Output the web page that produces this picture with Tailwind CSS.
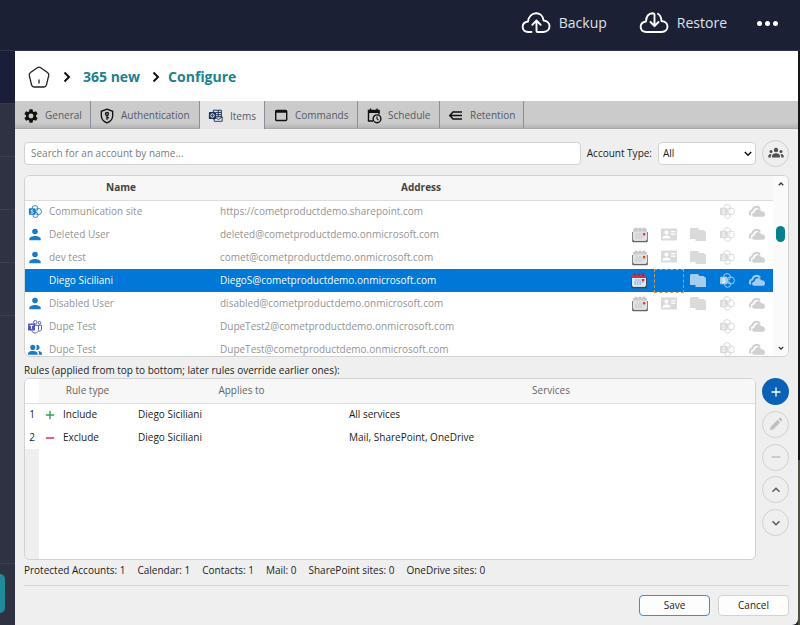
<!DOCTYPE html>
<html lang="en">
  <head>
    <meta charset="UTF-8" />
    <meta name="viewport" content="width=device-width, initial-scale=1.0" />
    <title>Configure - 365 new</title>
    <script src="https://cdn.jsdelivr.net/npm/@tailwindcss/browser@4"></script>
  </head>
  <body class="flex min-h-screen flex-col overflow-x-hidden bg-[#1b2035] font-['Open_Sans','Noto_Sans',sans-serif] text-[10px] text-[#1c1c1c]">
    <!-- icons -->
    <svg class="hidden">
      <symbol id="cal" viewBox="0 0 16 16">
        <path d="M1 5v9.500h14V5" fill="#fff" stroke="#666" stroke-width="1.600" stroke-linejoin="round" />
        <rect x="1" y="1.500" width="14" height="11.800" rx="1.500" fill="#e2e2e2" />
        <path d="M1 4.700V3Q1 1.500 2.500 1.500h11Q15 1.500 15 3v1.700z" fill="#cfcfcf" />
        <path d="M4 .5v2.500M8 .5v2.500M12 .5v2.500" stroke="#b5b5b5" />
        <path d="M4.500 7h6M3.500 9h9M3.500 11h7" stroke="#bcbcbc" stroke-dasharray="1.500 1" />
        <rect x="11" y="6" width="2.300" height="2.300" fill="#d8443c" />
      </symbol>
      <symbol id="calOn" viewBox="0 0 16 16">
        <path d="M1 5v9.500h14V5" fill="#fff" stroke="#444" stroke-width="1.600" stroke-linejoin="round" />
        <rect x="1" y="4" width="14" height="9.300" rx="1" fill="#d6ebfb" />
        <path d="M1 4.900V3Q1 1.500 2.500 1.500h11Q15 1.500 15 3v1.900z" fill="#d02f45" />
        <path d="M4 .5v2.500M8 .5v2.500M12 .5v2.500" stroke="#8b2030" />
        <path d="M4.500 7h6M3.500 9h9M3.500 11h7" stroke="#5f92cc" stroke-dasharray="1.500 1" />
        <rect x="11" y="6" width="2.300" height="2.300" fill="#d02f45" />
      </symbol>
      <symbol id="contact" viewBox="0 0 16 16">
        <path fill="currentColor" fill-rule="evenodd" d="M1 1.500h14a1 1 0 0 1 1 1v10a1 1 0 0 1-1 1H1a1 1 0 0 1-1-1v-10a1 1 0 0 1 1-1zM5.500 3.500a2.100 2.100 0 1 0 0 4.200 2.100 2.100 0 0 0 0-4.200zM1.500 11.500h8c0-2-1.800-3-4-3s-4 1-4 3zM10 4v1.200h4.500V4zM10 6.500v1.200h4.500V6.500z" />
      </symbol>
      <symbol id="files" viewBox="0 0 16 16">
        <path fill="currentColor" d="M0 2 1 1h7l1.500 2h4l2.500 2V14H5.500V12H0z" />
      </symbol>
      <symbol id="sp" viewBox="0 0 16 16">
        <g fill="none" stroke="currentColor" stroke-width="1">
          <circle cx="8" cy="4" r="3.400" />
          <circle cx="11.800" cy="7.500" r="3.600" />
          <circle cx="8.500" cy="11.300" r="3" />
        </g>
        <rect x="1" y="3.800" width="7.400" height="7.400" rx="1" fill="currentColor" />
        <path d="M6 6.100C5 5.300 3.400 5.600 3.400 6.600c0 1.100 2.600.8 2.600 1.900 0 1.100-1.800 1.200-2.800.6" fill="none" stroke="#fff" stroke-width="1" />
      </symbol>
      <symbol id="cloud" viewBox="0 0 16 16">
        <path fill="none" stroke="currentColor" stroke-width="2" d="M1.800 11.200C0 9.500 1 6.800 3.300 6.600 4 2.500 9 1.500 11 4.800" />
        <path fill="currentColor" d="M5 12.800c-2.800-.6-2.300-4.300.6-4.300.4-4 5.200-4.700 6.600-1.300 2.500-.4 3.800 1.200 3.800 3 0 1.500-.8 2.600-2 2.600z" />
      </symbol>
      <symbol id="user" viewBox="0 0 16 16">
        <circle cx="8" cy="4" r="3.200" fill="currentColor" />
        <path fill="currentColor" d="M1.500 14v-1.500C1.500 10 5 9 8 9s6.500 1 6.500 3.500V14z" />
      </symbol>
      <symbol id="group" viewBox="0 0 16 16">
        <circle cx="5.500" cy="5" r="2.900" fill="currentColor" />
        <path fill="currentColor" d="M0 13.500v-1.500C0 9.800 3 9 5.500 9s5.500.8 5.500 3v1.500zM9.300 2.300a2.900 2.900 0 1 1 0 5.400c.9-1.500.9-3.900 0-5.400zM11.500 9.200c2.500.2 4.500 1.100 4.500 2.800v1.500h-3.500V12c0-1.200-.4-2.100-1-2.800z" />
      </symbol>
      <symbol id="teams" viewBox="0 0 16 16">
        <g fill="none" stroke="currentColor" stroke-width="1.100">
          <circle cx="8.300" cy="2.600" r="2" />
          <circle cx="13.200" cy="3.200" r="1.500" />
          <path d="M7 6h5v5c0 5-7 5-7.500 1M12 6h3.500v4.500c0 1.500-1.500 2.500-3.300 2.200" />
        </g>
        <rect x="0" y="4" width="8" height="8" rx="1" fill="currentColor" />
        <path d="M2 6.200h4M4 6.200v4" stroke="#fff" stroke-width="1.100" />
      </symbol>
    </svg>

    <header class="flex h-[51px] shrink-0 items-center justify-end border-b border-[#30344a] pr-[22px] pb-1 text-sm text-[#dfe2ea]">
      <button class="flex items-center gap-2">
        <svg class="h-7 w-[30px]" viewBox="0 0 30 28" fill="none" stroke="#fff" stroke-width="1.900" stroke-linecap="round" stroke-linejoin="round">
          <path d="M10.500 23H7.500C-.2 22.500-.2 13.500 7 12.500 8.500 2 21.500 1.500 22.500 11.500 30.500 12 30.500 22.800 22.500 23H16.500Q15.500 23 15.500 22V12M11.300 15.800 15.500 11.500 19.700 15.800" />
        </svg>
        <span>Backup</span>
      </button>
      <button class="ml-8 flex items-center gap-2">
        <svg class="h-7 w-[30px]" viewBox="0 0 30 28" fill="none" stroke="#fff" stroke-width="1.900" stroke-linecap="round" stroke-linejoin="round">
          <path d="M19 4.800C21.300 6.300 22.300 8.500 22.500 12 30.500 12.500 30.500 22.800 22.500 23H7.500C-.2 22.500-.2 13.500 7 12.500 7.200 8 9.500 4.500 13.500 4.300Q15.500 4.300 15.500 6V17M11.500 13 15.500 17.200 19.500 13" />
        </svg>
        <span>Restore</span>
      </button>
      <button class="ml-[30px] flex gap-[3px]" aria-label="More">
        <span class="size-[5px] rounded-full bg-white"></span>
        <span class="size-[5px] rounded-full bg-white"></span>
        <span class="size-[5px] rounded-full bg-white"></span>
      </button>
    </header>

    <div class="flex grow">
      <!-- strip of the page behind the dialog -->
      <aside class="flex w-[15px] shrink-0 flex-col bg-[#2e3243]">
        <div class="h-[53px] border-b border-[#343950] bg-[#1b1e38]"></div>
        <div class="h-[53px] border-b border-[#3b3f50]"></div>
        <div class="h-[53px] border-b border-[#3b3f50]"></div>
        <div class="h-[53px] border-b border-[#3b3f50]"></div>
        <div class="h-[53px] border-b border-[#3b3f50]"></div>
        <div class="h-[248px] border-b border-[#3b3f50]"></div>
        <div class="mt-2.5 h-[39px] w-[5px] rounded-r-md bg-[#1f8a99]"></div>
      </aside>

      <main class="flex min-w-0 grow flex-col rounded-br-md bg-[#efefef]">
        <nav class="flex h-[50px] items-center bg-white px-3 pt-0.5 text-sm font-bold text-[#1d818e]">
          <a href="#" aria-label="Home">
            <svg class="size-6" viewBox="0 0 24 24" fill="none" stroke="#222" stroke-width="1.300" stroke-linejoin="round">
              <path d="M10.300 2.700Q12 1.600 13.700 2.700L20.500 7.500Q22.300 8.800 21.700 10.700L19.400 20Q18.800 22 17 22H7Q5.200 22 4.600 20L2.300 10.700Q1.700 8.800 3.500 7.500zM12 14.500v4" />
            </svg>
          </a>
          <svg class="mx-3 h-3 w-2" viewBox="0 0 8 12" fill="none" stroke="#111" stroke-width="2"><path d="M1.500 1.500 6 6l-4.500 4.500" /></svg>
          <a href="#">365 new</a>
          <svg class="mr-2 ml-3 h-3 w-2" viewBox="0 0 8 12" fill="none" stroke="#111" stroke-width="2"><path d="M1.500 1.500 6 6l-4.500 4.500" /></svg>
          <a href="#">Configure</a>
        </nav>

        <div class="flex h-7 border-b border-[#a9a9a9] bg-linear-to-b from-[#cbcbcb] from-80% to-[#b5b5b5] text-[#525a68]" role="tablist">
          <button role="tab" class="flex w-[76px] items-center gap-1.5 border-r border-[#8a8e98] pt-0.5 pl-2">
            <svg class="size-4" viewBox="0 0 24 24" fill="#111"><path fill-rule="evenodd" d="M9.700 2h4.600l.6 3.100 1.700 1 3-1.100 2.300 4-2.400 2v2l2.400 2-2.300 4-3-1.100-1.700 1-.6 3.100H9.700l-.6-3.100-1.700-1-3 1.100-2.300-4 2.400-2v-2l-2.400-2 2.300-4 3 1.100 1.700-1zM12 8.300a3.700 3.700 0 1 0 0 7.400 3.700 3.700 0 0 0 0-7.400z" /></svg>
            General
          </button>
          <button role="tab" class="flex w-[109px] items-center gap-1.5 border-r border-[#8a8e98] pt-0.5 pl-2">
            <svg class="size-4" viewBox="0 0 24 24" fill="none" stroke="#111" stroke-width="2"><path d="M12 1.800 20.500 5v6.500c0 5-3.500 8.800-8.500 10.700-5-1.900-8.500-5.700-8.500-10.700V5z" /><circle cx="12" cy="9" r="2.200" /><path d="M12 11v6.500M12 14.500h3" /></svg>
            Authentication
          </button>
          <button role="tab" aria-selected="true" class="-mb-px flex w-[65px] items-center gap-1.5 border-r border-[#8a8e98] bg-[#e6e6e6] pt-0.5 pl-2">
            <svg class="size-4" viewBox="-1 -1 18 18"><path d="M5 1.500h9v10H5zM8 4h6M8 6.500h6M8 9h6M10.500 1.500v10" fill="none" stroke="#1c3355" stroke-width="1.100" /><path d="M6 9h9v5H6z" fill="#e6e6e6" stroke="#1c3355" /><path d="m6 9 5 3 4-3" fill="none" stroke="#1c3355" /><rect y="3.500" width="8" height="8" rx="1" fill="#1c3355" /><circle cx="4" cy="7.500" r="1.900" fill="none" stroke="#fff" stroke-width="1.100" /></svg>
            Items
          </button>
          <button role="tab" class="flex w-[93px] items-center gap-1.5 border-r border-[#8a8e98] pt-0.5 pl-2">
            <svg class="size-4" viewBox="0 0 16 16" fill="none" stroke="#111" stroke-width="1.400"><rect x="2.700" y="2.500" width="11" height="10" rx="1" /><path d="M2.700 3.500h11" stroke-width="2.500" /></svg>
            Commands
          </button>
          <button role="tab" class="flex w-[82px] items-center gap-1.5 border-r border-[#8a8e98] pt-0.5 pl-2">
            <svg class="size-4" viewBox="0 0 16 16" fill="none" stroke="#111" stroke-width="1.400"><path d="M7 13H2.500V2.500h10.500v4M4.500.5v2M11 .5v2" /><path d="M2 3.500h11.500" stroke-width="3" /><circle cx="11" cy="10.800" r="3.900" /><path d="M11 8.500v2.300l1.500 1.300" stroke-width="1.100" /></svg>
            Schedule
          </button>
          <button role="tab" class="flex w-[84px] items-center gap-1.5 border-r border-[#8a8e98] pt-0.5 pl-2">
            <svg class="size-4" viewBox="0 0 16 16" fill="none" stroke="#111" stroke-width="1.500"><path d="M5.500 4H14M2 7.500h12M5.500 11H14M5.500 3.500 1.800 7.500 5.500 11.500" /></svg>
            Retention
          </button>
        </div>

        <div class="flex grow flex-col px-[9px]">
          <div class="mt-2.5 flex h-7 items-center">
            <input type="text" aria-label="Search" placeholder="Search for an account by name..." class="h-[23px] min-w-0 grow rounded border border-[#d2d2d2] bg-white px-1.5 text-[10px] outline-none placeholder:text-[#7b7b7b]" />
            <label for="accountType" class="ml-1.5">Account Type:</label>
            <div class="relative ml-1.5">
              <select id="accountType" class="h-[23px] w-[98px] appearance-none rounded border border-[#d2d2d2] bg-white px-1 text-[10px]">
                <option>All</option>
                <option>Users</option>
                <option>Groups</option>
              </select>
              <svg class="pointer-events-none absolute top-2 right-1 h-2 w-2" viewBox="0 0 8 8" fill="none" stroke="#111" stroke-width="1.500"><path d="m.8 2 3.200 3.200L7.200 2" /></svg>
            </div>
            <button aria-label="Groups" class="ml-1.5 flex size-[27px] items-center justify-center rounded-full border border-[#cfcfcf]">
              <svg class="size-4" viewBox="0 0 16 16" fill="#505050"><circle cx="8" cy="5" r="2.200" /><circle cx="3" cy="6.500" r="1.500" /><circle cx="13" cy="6.500" r="1.500" /><path d="M4 12.500v-1C4 9.200 6 8.300 8 8.300s4 .9 4 3.200v1zM.3 12.500v-1.500c0-1.500 1.500-2.200 3.400-2-.6.700-.9 1.500-.9 2.500v1zM15.700 12.500v-1.500c0-1.500-1.500-2.200-3.400-2 .6.700.9 1.500.9 2.500v1z" /></svg>
            </button>
          </div>

          <div class="mt-2 flex h-[182px] overflow-hidden rounded-md border border-[#d2d2d2] bg-white">
            <div class="grow overflow-hidden">
              <table class="w-full table-fixed">
                <thead class="bg-[#f7f7f7]">
                  <tr class="h-6 border-b border-[#dcdcdc] text-[#444]">
                    <th class="w-[192px]">Name</th>
                    <th>Address</th>
                    <th class="w-[29px]" aria-label="Calendar"></th>
                    <th class="w-[29px]" aria-label="Contacts"></th>
                    <th class="w-[29px]" aria-label="Mail"></th>
                    <th class="w-[29px]" aria-label="SharePoint"></th>
                    <th class="w-[32px]" aria-label="OneDrive"></th>
                  </tr>
                </thead>
                <tbody id="accounts"></tbody>
              </table>
            </div>
            <div class="flex w-[15px] shrink-0 flex-col items-center justify-between bg-[#fafafa] py-1">
              <svg class="h-2 w-1.5" viewBox="0 0 6 8" fill="none" stroke="#333" stroke-width="1.300"><path d="m.8 5.200 2.200-2.200 2.200 2.200" /></svg>
              <div class="mb-16 h-4 w-[9px] rounded-full bg-[#06808c]"></div>
              <svg class="h-2 w-1.5" viewBox="0 0 6 8" fill="none" stroke="#333" stroke-width="1.300"><path d="m.8 3 2.200 2.200L5.200 3" /></svg>
            </div>
          </div>

          <p class="mt-[5px] leading-4">Rules (applied from top to bottom; later rules override earlier ones):</p>

          <div class="flex gap-1.5">
            <div class="h-[182px] grow overflow-hidden rounded-md border border-[#d2d2d2] bg-linear-to-r from-[#efefef] from-[14px] to-white to-[14px]">
              <table class="w-full table-fixed bg-white">
                <thead>
                  <tr class="h-6 border-b border-[#dcdcdc] bg-[#f7f7f7] text-[#666]">
                    <th class="w-[14px] bg-white" aria-label="Number"></th>
                    <th class="w-[97px] font-normal">Rule type</th>
                    <th class="w-[211px] font-normal">Applies to</th>
                    <th class="font-normal">Services</th>
                  </tr>
                </thead>
                <tbody id="rules"></tbody>
              </table>
            </div>
            <div class="flex h-[158px] flex-col justify-between">
              <button aria-label="Add rule" class="flex size-[27px] items-center justify-center rounded-full bg-[#0a62b8]">
                <svg class="size-3" viewBox="0 0 12 12" stroke="#fff" stroke-width="1.300"><path d="M6 1.500v9M1.500 6h9" /></svg>
              </button>
              <button aria-label="Edit rule" class="flex size-[27px] items-center justify-center rounded-full border border-[#d0d0d0]">
                <svg class="size-4" viewBox="0 0 16 16" fill="#c0c0c0"><path d="m2 14 .6-3.200 7-7 2.600 2.600-7 7zM10.400 3l1.200-1.200q.6-.5 1.200 0l1.400 1.400q.5.600 0 1.200L13 5.600z" /></svg>
              </button>
              <button aria-label="Remove rule" class="flex size-[27px] items-center justify-center rounded-full border border-[#d0d0d0]">
                <svg class="size-3" viewBox="0 0 12 12" stroke="#b5b5b5" stroke-width="1.200"><path d="M1.500 6h9" /></svg>
              </button>
              <button aria-label="Move up" class="flex size-[27px] items-center justify-center rounded-full border border-[#d0d0d0]">
                <svg class="size-3" viewBox="0 0 12 12" fill="none" stroke="#555" stroke-width="1.400"><path d="m2.500 7.800 3.500-3.500 3.500 3.500" /></svg>
              </button>
              <button aria-label="Move down" class="flex size-[27px] items-center justify-center rounded-full border border-[#d0d0d0]">
                <svg class="size-3" viewBox="0 0 12 12" fill="none" stroke="#555" stroke-width="1.400"><path d="m2.500 4.300 3.500 3.500 3.500-3.500" /></svg>
              </button>
            </div>
          </div>

          <div class="flex h-[26px] gap-3 border-b border-[#d8d8d8] pt-0.5 leading-4">
            <span>Protected Accounts: 1</span>
            <span>Calendar: 1</span>
            <span>Contacts: 1</span>
            <span>Mail: 0</span>
            <span>SharePoint sites: 0</span>
            <span>OneDrive sites: 0</span>
          </div>

          <div class="mt-[9px] flex justify-end gap-2">
            <button class="h-[21px] w-[71px] rounded border border-[#3f8fd0] bg-[#fdfdfd]">Save</button>
            <button class="h-[21px] w-[71px] rounded border border-[#d2d2d2] bg-[#fdfdfd]">Cancel</button>
          </div>
        </div>
      </main>

      <div class="flex w-0.5 shrink-0 flex-col">
        <div class="grow bg-[#151718]"></div>
        <div class="h-[165px] bg-[#4a5240]"></div>
      </div>
    </div>

    <script>
const accounts = [
  { icon: "sp", color: "text-[#1a7cc7]", name: "Communication site", address: "https://cometproductdemo.sharepoint.com" },
  { icon: "user", color: "text-[#1a7cc7]", name: "Deleted User", address: "deleted@cometproductdemo.onmicrosoft.com", user: true },
  { icon: "user", color: "text-[#1a7cc7]", name: "dev test", address: "comet@cometproductdemo.onmicrosoft.com", user: true },
  { icon: "user", color: "text-[#0a74d2]", name: "Diego Siciliani", address: "DiegoS@cometproductdemo.onmicrosoft.com", user: true, selected: true },
  { icon: "user", color: "text-[#1a7cc7]", name: "Disabled User", address: "disabled@cometproductdemo.onmicrosoft.com", user: true },
  { icon: "teams", color: "text-[#5158bb]", name: "Dupe Test", address: "DupeTest2@cometproductdemo.onmicrosoft.com" },
  { icon: "group", color: "text-[#1a7cc7]", name: "Dupe Test", address: "DupeTest@cometproductdemo.onmicrosoft.com" },
];

const rules = [
  { type: "Include", color: "text-[#2f9e4f]", path: "M6 1v10M1 6h10", who: "Diego Siciliani", services: "All services" },
  { type: "Exclude", color: "text-[#cf3350]", path: "M1 6h10", who: "Diego Siciliani", services: "Mail, SharePoint, OneDrive" },
];

function icon(id) {
  return `<svg class="mx-auto size-4"><use href="#${id}" /></svg>`;
}

document.querySelector("#accounts").innerHTML = accounts.map((a) => `
  <tr class="h-[23px] ${a.selected ? "bg-[#0078d7] text-white" : "text-[#949494]"}">
    <td>
      <div class="flex items-center gap-[7px] pl-[3px]">
        <svg class="size-[14px] ${a.color}"><use href="#${a.icon}" /></svg>
        <span>${a.name}</span>
      </div>
    </td>
    <td class="pl-[3px]">${a.address}</td>
    <td>${a.user ? icon(a.selected ? "calOn" : "cal") : ""}</td>
    <td class="${a.selected ? "border border-dashed border-[#d99a50]" : "text-[#dadada]"}">${a.user && !a.selected ? icon("contact") : ""}</td>
    <td class="${a.selected ? "text-[#a5cdf0]" : "text-[#dadada]"}">${a.user ? icon("files") : ""}</td>
    <td class="${a.selected ? "text-[#a5cdf0]" : "text-[#dadada]"}">${icon("sp")}</td>
    <td class="${a.selected ? "text-[#a5cdf0]" : "text-[#d0d0d0]"}">${icon("cloud")}</td>
  </tr>`).join("");

document.querySelector("#rules").innerHTML = rules.map((r, i) => `
  <tr class="h-[23px]">
    <td class="text-center">${i + 1}</td>
    <td>
      <div class="flex items-center gap-2 pl-1.5">
        <svg class="size-[10px] ${r.color}" viewBox="0 0 12 12" stroke="currentColor" stroke-width="1.600"><path d="${r.path}" /></svg>
        <span>${r.type}</span>
      </div>
    </td>
    <td class="pl-0.5">${r.who}</td>
    <td class="pl-0.5">${r.services}</td>
  </tr>`).join("");
    </script>
  </body>
</html>
